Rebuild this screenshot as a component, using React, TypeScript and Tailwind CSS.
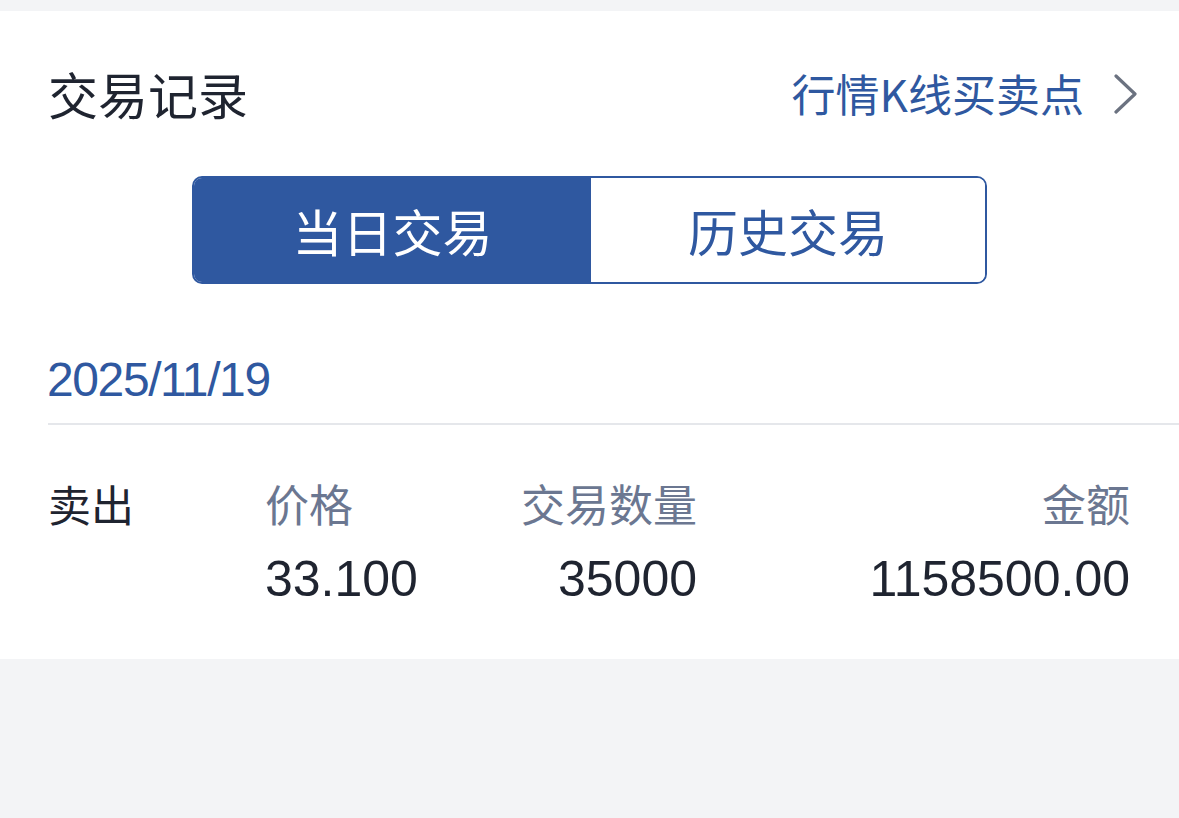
import React from "react";

const cjk = "font-['Noto_Sans_CJK_SC','Noto_Sans',sans-serif]";
const num = "font-['Liberation_Sans','Noto_Sans_CJK_SC',sans-serif]";

export default function App() {
  return (
    <div className="w-[1179px] h-[818px] bg-[#f3f4f6] pt-[11px] overflow-hidden">
      <div className="bg-white h-[648px] flex flex-col">
        {/* header */}
        <div className="mt-[57px] h-[50px] flex items-center justify-between pl-[48px] pr-[41px]">
          <div className={`${cjk} text-[50px] leading-[50px] text-[#1f2430]`}>交易记录</div>
          <div className="flex items-center">
            <span className={`${cjk} text-[44px] leading-[50px] text-[#2f58a0]`}>行情K线买卖点</span>
            <svg className="ml-[30px] mt-[2px]" width="24" height="40" viewBox="0 0 24 40" fill="none">
              <polyline points="2,2 21,20 2,38" stroke="#6b7280" strokeWidth="3.2" strokeLinecap="round" strokeLinejoin="round" />
            </svg>
          </div>
        </div>

        {/* segmented control */}
        <div className="mt-[58px] ml-[192px] w-[795px] h-[108px] border-[2.5px] border-[#2f58a0] rounded-[10px] overflow-hidden flex">
          <div className={`w-[397px] bg-[#2f58a0] flex items-center justify-center text-white ${cjk} text-[50px]`}>
            当日交易
          </div>
          <div className={`flex-1 bg-white flex items-center justify-center text-[#2f58a0] ${cjk} text-[50px]`}>
            历史交易
          </div>
        </div>

        {/* date */}
        <div className={`mt-[71px] h-[50px] flex items-center pl-[47px] ${num} text-[48px] tracking-[-1.4px] text-[#2f58a0]`}>
          2025/11/19
        </div>
        <div className="mt-[18px] ml-[48px] h-[2px] bg-[#e5e7eb]" />

        {/* row labels */}
        <div className="mt-[53px] h-[50px] flex items-center pl-[48px] pr-[49px]">
          <div className={`w-[217px] ${cjk} text-[43px] text-[#1f2430]`}>卖出</div>
          <div className={`w-[200px] ${cjk} text-[44px] text-[#6b7791]`}>价格</div>
          <div className={`w-[232px] text-right ${cjk} text-[44px] text-[#6b7791]`}>交易数量</div>
          <div className={`flex-1 text-right ${cjk} text-[44px] text-[#6b7791]`}>金额</div>
        </div>
        <div className="mt-[26px] h-[50px] flex items-center pl-[48px] pr-[49px]">
          <div className="w-[217px]" />
          <div className={`w-[200px] ${num} text-[50px] text-[#1f2430]`}>33.100</div>
          <div className={`w-[232px] text-right ${num} text-[50px] text-[#1f2430]`}>35000</div>
          <div className={`flex-1 text-right ${num} text-[50px] text-[#1f2430]`}>1158500.00</div>
        </div>
      </div>
    </div>
  );
}
